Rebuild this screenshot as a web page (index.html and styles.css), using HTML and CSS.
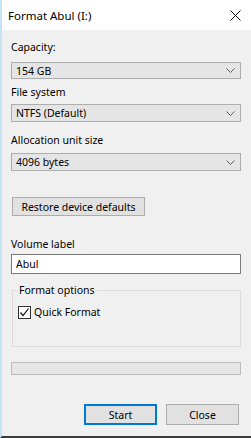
FILE: index.html
```html
<!DOCTYPE html>
<html lang="en">
<head>
    <meta charset="UTF-8">
    <title>Format Abul (I:)</title>
    <link rel="stylesheet" href="styles.css">
</head>
<body>
    <div class="window">
        <!-- Title bar -->
        <div class="titlebar">
            <span class="title">Format Abul (I:)</span>
            <svg class="close" width="11" height="11" viewBox="0 0 11 11">
                <path d="M0.5 0.5 L10.5 10.5 M10.5 0.5 L0.5 10.5" stroke="#111" stroke-width="1" fill="none"/>
            </svg>
        </div>

        <!-- Dialog body -->
        <div class="content">
            <div class="label lbl-capacity">Capacity:</div>
            <div class="combo combo-capacity">
                <span>154 GB</span>
                <svg class="chevron" width="9" height="5" viewBox="0 0 9 5"><polyline points="0.5,0.5 4.5,4.5 8.5,0.5" fill="none" stroke="#606060"/></svg>
            </div>

            <div class="label lbl-fs">File system</div>
            <div class="combo">
                <span>NTFS (Default)</span>
                <svg class="chevron" width="9" height="5" viewBox="0 0 9 5"><polyline points="0.5,0.5 4.5,4.5 8.5,0.5" fill="none" stroke="#606060"/></svg>
            </div>

            <div class="label lbl-alloc">Allocation unit size</div>
            <div class="combo combo-alloc">
                <span>4096 bytes</span>
                <svg class="chevron" width="9" height="5" viewBox="0 0 9 5"><polyline points="0.5,0.5 4.5,4.5 8.5,0.5" fill="none" stroke="#606060"/></svg>
            </div>

            <button class="btn btn-restore">Restore device defaults</button>

            <div class="label lbl-volume">Volume label</div>
            <div class="textbox">Abul</div>

            <fieldset class="options">
                <legend>Format options</legend>
                <div class="check-row">
                    <span class="checkbox">
                        <svg width="11" height="11" viewBox="0 0 11 11"><polyline points="1.5,5.5 4,8.5 9.5,1.5" fill="none" stroke="#111" stroke-width="1.2"/></svg>
                    </span>
                    <span>Quick Format</span>
                </div>
            </fieldset>

            <div class="progress"></div>

            <div class="actions">
                <button class="btn btn-default">Start</button>
                <button class="btn">Close</button>
            </div>
        </div>
    </div>
</body>
</html>
```

FILE: styles.css
```css
/* Windows 10 style format dialog */
html, body {
    margin: 0;
    padding: 0;
}

body {
    font-family: "Noto Sans", "Open Sans", sans-serif;
    font-size: 10.5px;
    color: #000;
    background-color: #f0f0f0;
}

.window {
    width: 251px;
    height: 438px;
    box-sizing: border-box;
    border-left: 2px solid #c4e5f6;
    border-bottom: 2px solid #3c3c3c;
    background-color: #f0f0f0;
    overflow: hidden;
}

.titlebar {
    height: 30px;
    background-color: #fff;
    display: flex;
    align-items: center;
    justify-content: space-between;
    padding: 0 10px 0 6px;
}

.title {
    font-size: 11.5px;
}

.close {
    display: block;
}

.content {
    padding: 0 10px 0 9px;
}

.label {
    line-height: 13px;
}

.lbl-capacity {
    margin-top: 11px;
}

.lbl-fs {
    margin-top: 7px;
}

.lbl-alloc {
    margin-top: 12px;
}

.lbl-volume {
    margin-top: 22px;
}

.combo {
    height: 18px;
    box-sizing: border-box;
    margin-top: 5px;
    border: 1px solid #adadad;
    background-color: #e5e5e5;
    display: flex;
    align-items: center;
    justify-content: space-between;
    padding: 0 5px 0 4px;
}

.combo-capacity {
    height: 17px;
    margin-top: 8px;
}

.combo-alloc {
    margin-top: 6px;
}

.chevron {
    display: block;
}

.btn {
    font-family: inherit;
    font-size: 10.5px;
    color: #000;
    height: 21px;
    box-sizing: border-box;
    border: 1px solid #adadad;
    background-color: #e1e1e1;
    padding: 0;
}

.btn-restore {
    display: block;
    width: 133px;
    height: 19px;
    margin: 26px 0 0 1px;
}

.textbox {
    height: 20px;
    box-sizing: border-box;
    margin-top: 3px;
    border: 1px solid #7a7a7a;
    background-color: #fff;
    padding: 0 4px;
    line-height: 18px;
}

.options {
    margin: 10px 0 0 1px;
    padding: 0 4px 27px;
    border: 1px solid #dcdcdc;
}

.options legend {
    padding: 0 2px;
    line-height: 13px;
}

.check-row {
    display: flex;
    align-items: center;
    gap: 3px;
    margin: 9px 0 0 1px;
    line-height: 13px;
}

.checkbox {
    width: 13px;
    height: 13px;
    box-sizing: border-box;
    border: 1px solid #333;
    background-color: #fff;
    display: flex;
    align-items: center;
    justify-content: center;
}

.checkbox svg {
    display: block;
}

.progress {
    height: 13px;
    box-sizing: border-box;
    margin-top: 15px;
    border: 1px solid #bcbcbc;
    background-color: #e6e6e6;
}

.actions {
    display: flex;
    justify-content: flex-end;
    gap: 9px;
    margin-top: 29px;
    padding-right: 2px;
}

.actions .btn {
    width: 73px;
}

.btn-default {
    border: 2px solid #0078d7;
}
```
